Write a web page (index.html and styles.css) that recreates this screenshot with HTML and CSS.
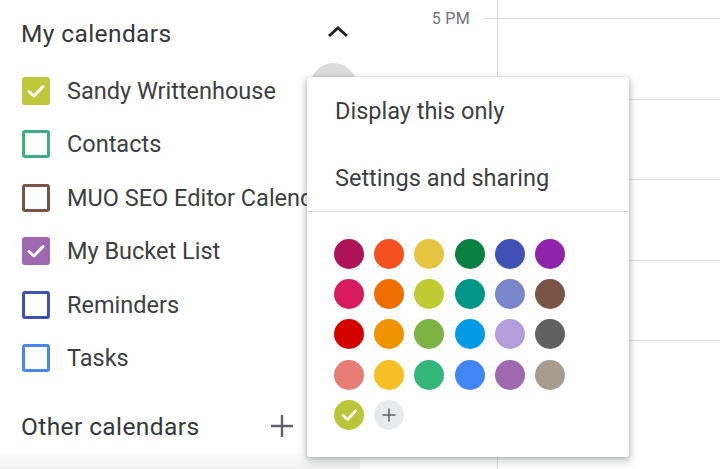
FILE: index.html
```html
<!DOCTYPE html>
<html>
<head>
<meta charset="utf-8">
<link rel="stylesheet" href="styles.css">
</head>
<body>
<div class="app">
  <aside class="sidebar">
    <div class="section-head">
      <span class="head-title">My calendars</span>
      <svg class="chevron" width="22" height="14" viewBox="0 0 22 14"><polyline points="2,11 11,3 20,11" fill="none" stroke="#202124" stroke-width="3"/></svg>
    </div>
    <div class="cal-row">
      <span class="box filled" style="--c:#bfc83a"><svg width="28" height="28" viewBox="0 0 28 28"><polyline points="7,14.5 12,19 21,9.5" fill="none" stroke="#fff" stroke-width="3" stroke-linecap="round" stroke-linejoin="round"/></svg></span>
      <span class="cal-name">Sandy Writtenhouse</span>
    </div>
    <div class="cal-row">
      <span class="box" style="--c:#3fae83"></span>
      <span class="cal-name">Contacts</span>
    </div>
    <div class="cal-row">
      <span class="box" style="--c:#795548"></span>
      <span class="cal-name">MUO SEO Editor Calendar</span>
    </div>
    <div class="cal-row">
      <span class="box filled" style="--c:#9e69af"><svg width="28" height="28" viewBox="0 0 28 28"><polyline points="7,14.5 12,19 21,9.5" fill="none" stroke="#fff" stroke-width="3" stroke-linecap="round" stroke-linejoin="round"/></svg></span>
      <span class="cal-name">My Bucket List</span>
    </div>
    <div class="cal-row">
      <span class="box" style="--c:#3f51b5"></span>
      <span class="cal-name">Reminders</span>
    </div>
    <div class="cal-row">
      <span class="box" style="--c:#4a86e8"></span>
      <span class="cal-name">Tasks</span>
    </div>
    <div class="section-foot">
      <span class="head-title">Other calendars</span>
      <svg class="plus" width="26" height="26" viewBox="0 0 26 26"><path d="M13 2v22M2 13h22" stroke="#5f6368" stroke-width="2.4" fill="none"/></svg>
    </div>
  </aside>
  <div class="gutter">
    <div class="hour-label"><span class="time">5 PM</span><span class="tick"></span></div>
  </div>
  <main class="grid">
    <div class="hour first"></div>
    <div class="hour"></div>
    <div class="hour"></div>
    <div class="hour"></div>
    <div class="hour"></div>
    <div class="hour"></div>
  </main>
</div>

<div class="hover-circle"></div>
<div class="menu">
  <div class="menu-item">Display this only</div>
  <div class="menu-item">Settings and sharing</div>
  <div class="divider"></div>
  <div class="swatches">
    <span class="dot" style="--c:#ad1457"></span>
    <span class="dot" style="--c:#f4511e"></span>
    <span class="dot" style="--c:#e4c441"></span>
    <span class="dot" style="--c:#0b8043"></span>
    <span class="dot" style="--c:#3f51b5"></span>
    <span class="dot" style="--c:#8e24aa"></span>
    <span class="dot" style="--c:#d81b60"></span>
    <span class="dot" style="--c:#ef6c00"></span>
    <span class="dot" style="--c:#c0ca33"></span>
    <span class="dot" style="--c:#009688"></span>
    <span class="dot" style="--c:#7986cb"></span>
    <span class="dot" style="--c:#795548"></span>
    <span class="dot" style="--c:#d50000"></span>
    <span class="dot" style="--c:#f09300"></span>
    <span class="dot" style="--c:#7cb342"></span>
    <span class="dot" style="--c:#039be5"></span>
    <span class="dot" style="--c:#b39ddb"></span>
    <span class="dot" style="--c:#616161"></span>
    <span class="dot" style="--c:#e67c73"></span>
    <span class="dot" style="--c:#f6bf26"></span>
    <span class="dot" style="--c:#33b679"></span>
    <span class="dot" style="--c:#4285f4"></span>
    <span class="dot" style="--c:#9e69af"></span>
    <span class="dot" style="--c:#a79b8e"></span>
    <span class="dot" style="--c:#bac53a"><svg width="30" height="30" viewBox="0 0 30 30"><polyline points="9,15.5 13.5,19.5 21.5,11" fill="none" stroke="#fff" stroke-width="2.6" stroke-linecap="round" stroke-linejoin="round"/></svg></span>
    <span class="dot add"><svg width="30" height="30" viewBox="0 0 30 30"><path d="M15 8.5v13M8.5 15h13" stroke="#5f6368" stroke-width="1.6" fill="none"/></svg></span>
  </div>
</div>
</body>
</html>
```

FILE: styles.css
```css
* { box-sizing: border-box; }
html, body {
  margin: 0;
  padding: 0;
  width: 720px;
  height: 469px;
  overflow: hidden;
  background: #fff;
  font-family: Roboto, "Liberation Sans", Arial, sans-serif;
  color: #3c4043;
}
.app {
  display: flex;
  width: 720px;
  height: 469px;
}
.sidebar {
  width: 360px;
  flex: none;
  overflow: hidden;
  white-space: nowrap;
  position: relative;
  background: linear-gradient(to bottom, #fff 0, #fff 452px, #f1f1f1 469px);
}
.section-head {
  height: 64px;
  width: 349px;
  display: flex;
  align-items: center;
  padding-left: 21px;
  padding-top: 2px;
}
.head-title {
  font-size: 24.5px;
  font-weight: 400;
  letter-spacing: 0.4px;
  color: #35383b;
}
.chevron {
  margin-left: auto;
  margin-top: -3px;
}
.cal-row {
  height: 53.5px;
  display: flex;
  align-items: center;
  padding-left: 22px;
}
.box {
  width: 28px;
  height: 28px;
  flex: none;
  border: 3px solid var(--c);
  border-radius: 3px;
  margin-right: 17px;
  display: flex;
  align-items: center;
  justify-content: center;
}
.box.filled {
  background: var(--c);
  border: none;
}
.cal-name {
  font-size: 23.5px;
  color: #3c4043;
}
.section-foot {
  height: 82px;
  width: 295px;
  display: flex;
  align-items: center;
  padding-left: 21px;
}
.plus {
  margin-left: auto;
}
.gutter {
  width: 137px;
  flex: none;
  position: relative;
}
.hour-label {
  display: flex;
  align-items: center;
  justify-content: flex-end;
  height: 20px;
  margin-top: 8px;
}
.time {
  font-size: 16px;
  color: #70757a;
  letter-spacing: 0.3px;
  margin-right: 13px;
}
.tick {
  width: 14px;
  height: 1px;
  background: #dadce0;
}
.grid {
  flex: 1;
  border-left: 1px solid #dadce0;
  display: flex;
  flex-direction: column;
}
.hour {
  height: 80.6px;
  flex: none;
  border-top: 1px solid #dadce0;
}
.hour.first {
  height: 18px;
  border-top: none;
}
.hover-circle {
  position: absolute;
  left: 310px;
  top: 63px;
  width: 47px;
  height: 47px;
  border-radius: 50%;
  background: #dcdcdc;
}
.menu {
  position: absolute;
  left: 307px;
  top: 77px;
  width: 322px;
  height: 380px;
  background: #fff;
  border-radius: 3px;
  box-shadow: 0 4px 8px 2px rgba(60,64,67,0.18), 0 1px 4px rgba(60,64,67,0.3);
}
.menu-item {
  height: 67px;
  display: flex;
  align-items: center;
  padding-left: 28px;
  font-size: 23.5px;
  color: #3c4043;
}
.divider {
  height: 1px;
  background: #dadce0;
}
.swatches {
  display: grid;
  grid-template-columns: repeat(6, 30px);
  grid-auto-rows: 30px;
  column-gap: 10.2px;
  row-gap: 10.2px;
  padding: 27px 0 0 27px;
}
.dot {
  width: 30px;
  height: 30px;
  border-radius: 50%;
  background: var(--c);
  display: block;
}
.dot svg { display: block; }
.dot.add {
  background: #e8eaed;
}
```
